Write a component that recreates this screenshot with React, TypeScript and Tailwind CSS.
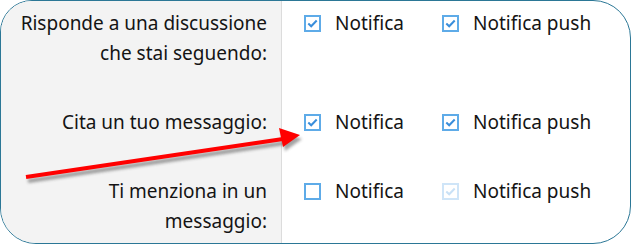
import React from "react";

function Box({ state }: { state: "on" | "off" | "disabled" }) {
  const border = state === "disabled" ? "#cfe5f8" : "#5eabe8";
  const check = state === "disabled" ? "#c9e1f6" : "#3a8edb";
  return (
    <svg width="17" height="17" viewBox="0 0 17 17" className="shrink-0">
      <rect x="1" y="1" width="15" height="15" fill="white" stroke={border} strokeWidth="2" />
      {state !== "off" && (
        <path d="M4.3 8.5 L7.2 11.3 L12.7 5.5" fill="none" stroke={check} strokeWidth="2" />
      )}
    </svg>
  );
}

function Opt({ state, label, w }: { state: "on" | "off" | "disabled"; label: string; w: string }) {
  return (
    <div className={`flex items-center h-[30px] ${w}`}>
      <Box state={state} />
      <span className="ml-[14px]">{label}</span>
    </div>
  );
}

function Row({ lines, a, b, gap }: { lines: string[]; a: "on" | "off" | "disabled"; b: "on" | "off" | "disabled"; gap: string }) {
  return (
    <div className={`flex ${gap}`}>
      <div className="w-[281px] shrink-0 text-right pr-[15px]">
        {lines.map((l) => (
          <div key={l} className="h-[30px] leading-[30px]">{l}</div>
        ))}
      </div>
      <div className="flex pl-[22px]">
        <Opt state={a} label="Notifica" w="w-[138px]" />
        <Opt state={b} label="Notifica push" w="" />
      </div>
    </div>
  );
}

export default function App() {
  return (
    <div className="w-[631px] h-[244px] bg-white">
      <div
        className="relative w-[631px] h-[244px] border border-[#2b7796] overflow-hidden rounded-tl-[32px] rounded-tr-[38px] rounded-bl-[36px] rounded-br-[38px] text-[19px] text-[#141414]"
        style={{ fontFamily: '"Noto Sans", "Open Sans", sans-serif' }}
      >
        <div className="absolute left-0 top-0 bottom-0 w-[281px] bg-[#f3f3f3] border-r border-[#dcdcdc]" />
        <div className="relative flex flex-col pt-[7px]">
          <Row lines={["Risponde a una discussione", "che stai seguendo:"]} a="on" b="on" gap="mb-[39px]" />
          <Row lines={["Cita un tuo messaggio:"]} a="on" b="on" gap="mb-[39px]" />
          <Row lines={["Ti menziona in un", "messaggio:"]} a="off" b="disabled" gap="" />
        </div>
        <svg className="absolute left-0 top-0" width="631" height="244" viewBox="0 0 631 244">
          <defs>
            <filter id="sh" x="-10%" y="-50%" width="120%" height="200%">
              <feGaussianBlur stdDeviation="1.6" />
            </filter>
          </defs>
          <g transform="translate(2,4)" opacity="0.45" filter="url(#sh)">
            <line x1="25" y1="176" x2="282" y2="138" stroke="#333" strokeWidth="4" />
            <polygon points="299,134 278,127 282,146" fill="#333" />
          </g>
          <line x1="25" y1="176" x2="282" y2="138" stroke="#ff0000" strokeWidth="4" strokeLinecap="butt" />
          <polygon points="299,134 278,127 282,146" fill="#ff0000" />
        </svg>
      </div>
    </div>
  );
}
